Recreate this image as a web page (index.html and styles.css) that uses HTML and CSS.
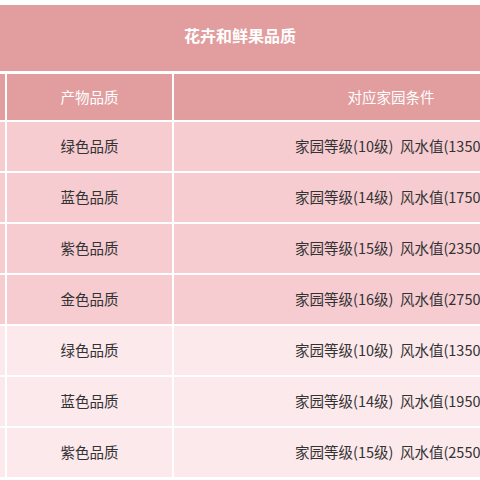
FILE: index.html
```html
<!DOCTYPE html>
<html lang="zh">
<head>
<meta charset="utf-8">
<link rel="stylesheet" href="styles.css">
</head>
<body>
<div class="page">
  <div class="title">花卉和鲜果品质</div>
  <div class="grid">
    <div class="cell head"></div>
    <div class="cell head">产物品质</div>
    <div class="cell head wide">对应家园条件</div>

    <div class="cell dark"></div>
    <div class="cell dark">绿色品质</div>
    <div class="cell dark cond">家园等级(10级)&nbsp; 风水值(13500)</div>

    <div class="cell dark"></div>
    <div class="cell dark">蓝色品质</div>
    <div class="cell dark cond">家园等级(14级)&nbsp; 风水值(17500)</div>

    <div class="cell dark"></div>
    <div class="cell dark">紫色品质</div>
    <div class="cell dark cond">家园等级(15级)&nbsp; 风水值(23500)</div>

    <div class="cell dark"></div>
    <div class="cell dark">金色品质</div>
    <div class="cell dark cond">家园等级(16级)&nbsp; 风水值(27500)</div>

    <div class="cell light"></div>
    <div class="cell light">绿色品质</div>
    <div class="cell light cond">家园等级(10级)&nbsp; 风水值(13500)</div>

    <div class="cell light"></div>
    <div class="cell light">蓝色品质</div>
    <div class="cell light cond">家园等级(14级)&nbsp; 风水值(19500)</div>

    <div class="cell light"></div>
    <div class="cell light">紫色品质</div>
    <div class="cell light cond">家园等级(15级)&nbsp; 风水值(25500)</div>
  </div>
</div>
</body>
</html>
```

FILE: styles.css
```css
html, body {
  margin: 0;
  padding: 0;
  background: #ffffff;
  overflow: hidden;
  width: 480px;
  height: 480px;
}
.page {
  width: 620px;
  padding-top: 5px;
  display: flex;
  flex-direction: column;
  gap: 3px;
  font-family: "Noto Sans CJK SC", "Noto Sans", sans-serif;
}
.title {
  height: 60px;
  padding-bottom: 6px;
  background: #e29d9e;
  color: #ffffff;
  font-size: 16px;
  font-weight: 700;
  display: flex;
  align-items: center;
  justify-content: center;
  width: 480px;
}
.grid {
  display: grid;
  grid-template-columns: 5px 165px 434px;
  grid-template-rows: 46px repeat(7, 49px);
  column-gap: 2px;
  row-gap: 2px;
}
.cell {
  display: flex;
  align-items: center;
  justify-content: center;
  font-size: 14.5px;
  white-space: nowrap;
  overflow: hidden;
  padding-bottom: 2px;
  box-sizing: border-box;
}
.head {
  background: #e29d9e;
  color: #ffffff;
}
.dark {
  background: #f6ccd1;
  color: #333333;
}
.light {
  background: #fce9ec;
  color: #333333;
}
.cond {
  justify-content: flex-start;
  padding-left: 121px;
}
```
